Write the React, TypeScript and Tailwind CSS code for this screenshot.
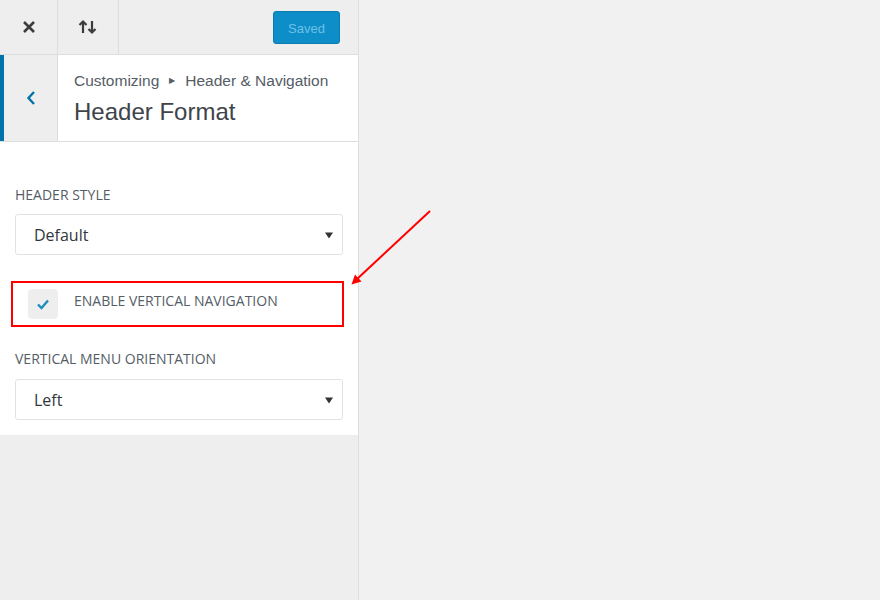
import React from "react";

function Select({ value }: { value: string }) {
  return (
    <div className="ml-[15px] mr-[15px] h-[41px] rounded-[3px] border border-[#e2e2e2] bg-white flex items-center justify-between pl-[18px] pr-[9px]">
      <span className="text-[16px] text-[#32373c]">{value}</span>
      <svg width="8" height="8" viewBox="0 0 8 8"><path d="M0 1.5 L8 1.5 L4 7.5 Z" fill="#333" /></svg>
    </div>
  );
}

export default function App() {
  return (
    <div className="relative w-[880px] h-[600px] flex bg-[#f1f1f1] overflow-hidden" style={{ fontFamily: '"Open Sans", sans-serif' }}>
      <div className="w-[358px] h-full bg-[#eeeeee] flex flex-col border-r border-[#dedede] box-content">
        {/* top bar */}
        <div className="h-[55px] flex border-b border-[#dddddd]">
          <div className="w-[58px] border-r border-[#dddddd] flex items-center justify-center">
            <svg width="14" height="14" viewBox="0 0 14 14"><path d="M2 2 L12 12 M12 2 L2 12" stroke="#3c3c3c" strokeWidth="2.6" /></svg>
          </div>
          <div className="w-[61px] border-r border-[#dddddd] flex items-center justify-center">
            <svg width="20" height="16" viewBox="0 0 20 16">
              <path d="M5 14 V3 M1.5 6 L5 2.5 L8.5 6" stroke="#3c3c3c" strokeWidth="2.2" fill="none" />
              <path d="M14 2 V13 M10.5 10 L14 13.5 L17.5 10" stroke="#3c3c3c" strokeWidth="2.2" fill="none" />
            </svg>
          </div>
          <div className="flex-1 flex items-center justify-end pr-[18px]">
            <div className="w-[67px] h-[33px] mt-[1px] rounded-[3px] bg-[#0d8ec8] border border-[#0a7cb0] flex items-center justify-center text-[13px] text-[#6fc0e6] pt-[2px]" style={{ fontFamily: '"Liberation Sans", Arial, sans-serif' }}>
              Saved
            </div>
          </div>
        </div>
        {/* section header */}
        <div className="h-[87px] flex border-b border-[#dddddd]" style={{ fontFamily: '"Liberation Sans", Arial, sans-serif' }}>
          <div className="w-[4px] bg-[#0073aa]" />
          <div className="w-[54px] border-r border-[#dddddd] flex items-center justify-center bg-[#eeeeee]">
            <svg width="10" height="16" viewBox="0 0 10 16"><path d="M8 2 L2.5 8 L8 14" stroke="#0073aa" strokeWidth="2.4" fill="none" /></svg>
          </div>
          <div className="flex-1 bg-white pl-[16px] pt-[15px]">
            <div className="text-[15.5px] text-[#555d66] flex items-center leading-[22px]">
              Customizing
              <span className="mx-[10px] text-[8px] text-[#555d66]">▶</span>
              Header &amp; Navigation
            </div>
            <div className="text-[24px] text-[#3e444a] leading-[32px] mt-[4px]">Header Format</div>
          </div>
        </div>
        {/* content */}
        <div className="bg-white h-[293px] pt-[44px]">
          <div className="px-[15px] text-[14px] text-[#555d66] leading-[18px] mb-[10px]">HEADER STYLE</div>
          <Select value="Default" />
          <div className="ml-[11px] mr-[14px] mt-[26px] h-[46px] border-2 border-[#ff0000] flex items-center pl-[15px]">
            <div className="w-[30px] h-[30px] rounded-[4px] bg-[#eeeeee] flex items-center justify-center">
              <svg width="14" height="12" viewBox="0 0 14 12"><path d="M2 6.5 L5.5 10 L12 2.5" stroke="#1e8cbe" strokeWidth="2.4" fill="none" /></svg>
            </div>
            <span className="ml-[16px] text-[14px] text-[#555d66] -mt-[8px]">ENABLE VERTICAL NAVIGATION</span>
          </div>
          <div className="px-[15px] text-[14px] text-[#555d66] leading-[18px] mt-[23px] mb-[11px]">VERTICAL MENU ORIENTATION</div>
          <Select value="Left" />
        </div>
      </div>
      <div className="flex-1" />
      <svg className="absolute left-0 top-0 pointer-events-none" width="880" height="600" viewBox="0 0 880 600">
        <path d="M430 211 L356 280" stroke="#ff0000" strokeWidth="2" fill="none" />
        <path d="M351.5 284.5 L355 274.5 L361.5 281.5 Z" fill="#ff0000" />
      </svg>
    </div>
  );
}
